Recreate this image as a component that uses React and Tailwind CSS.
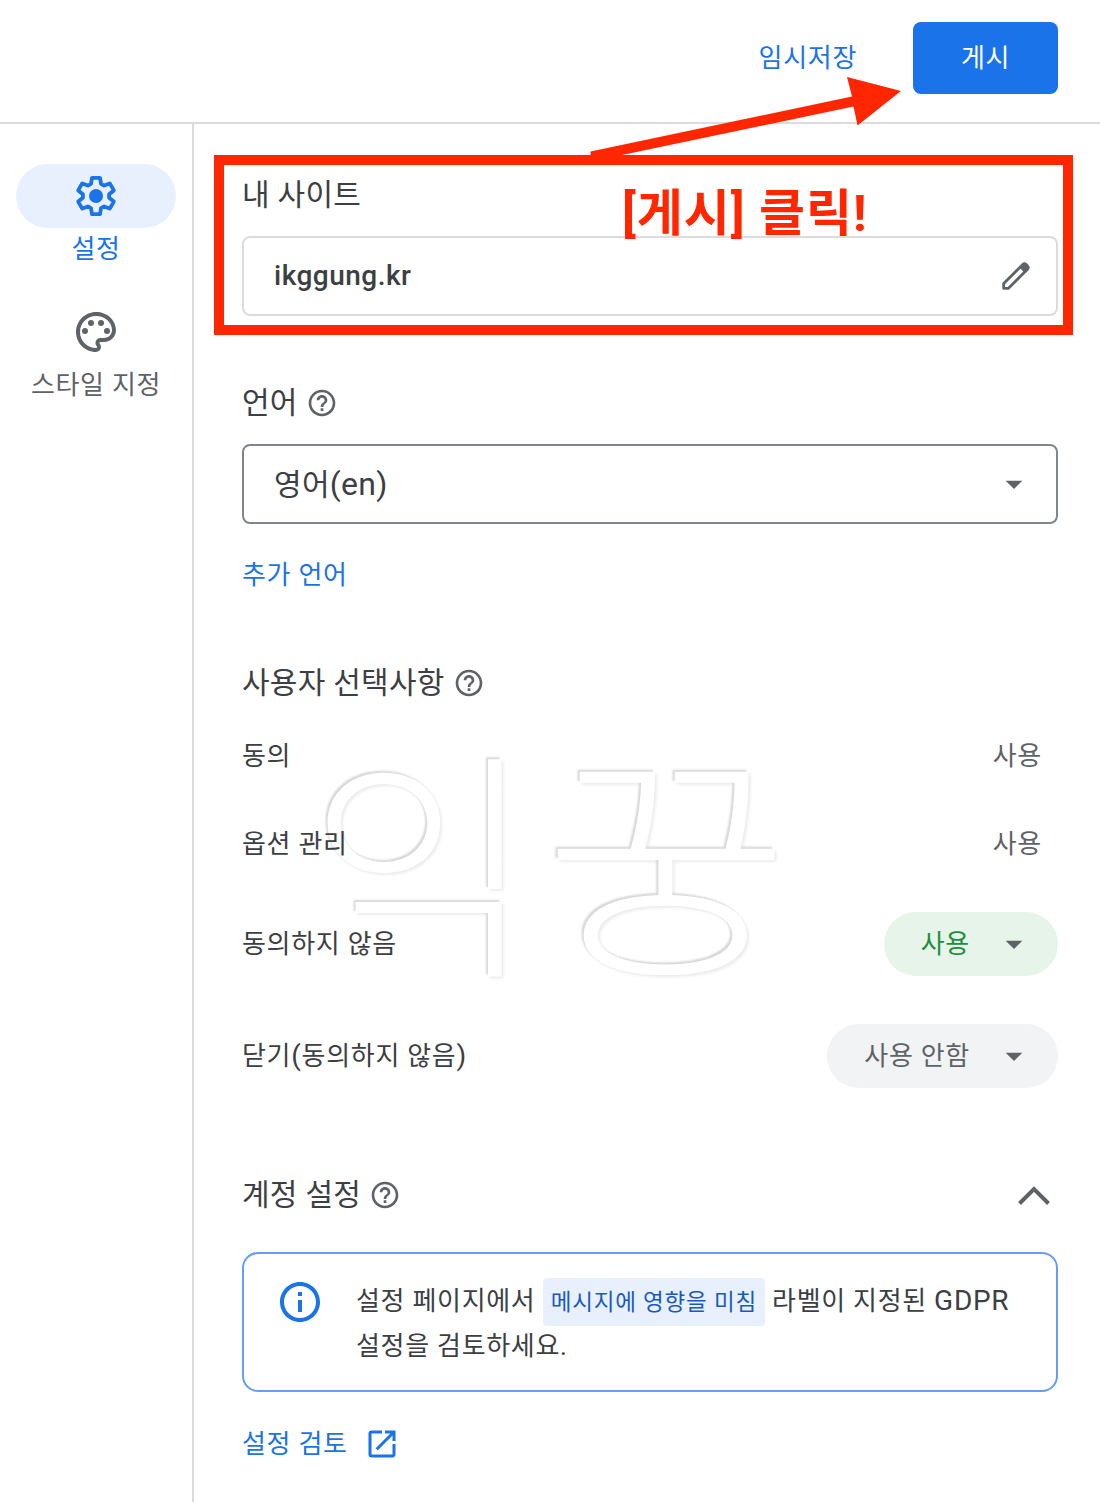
import { MdArrowDropDown, MdHelpOutline, MdInfoOutline, MdOpenInNew, MdOutlinePalette } from 'react-icons/md';

const OPTIONS = [
  { label: '동의', value: '사용' },
  { label: '옵션 관리', value: '사용' },
];

function GearIcon() {
  return (
    <svg viewBox="0 0 48 48" className="w-12 h-12" fill="none">
      <path
        d="M19 11.800 20 5.800H28L29 11.800 32.100 13.600 37.800 11.400 41.800 18.400 37.100 22.200V25.800L41.800 29.600 37.800 36.600 32.100 34.400 29 36.200 28 42.200H20L19 36.200 15.900 34.400 10.200 36.600 6.200 29.600 10.900 25.800V22.200L6.200 18.400 10.200 11.400 15.900 13.600Z"
        stroke="currentColor"
        strokeWidth="3.8"
        strokeLinejoin="round"
      />
      <circle cx="24" cy="24" r="7" fill="currentColor" />
    </svg>
  );
}

function PencilIcon() {
  return (
    <svg viewBox="0 0 36 36" className="w-9 h-9" fill="none">
      <path d="M5.700 30.300v-4.800L24.500 6.700q1.900-1.900 3.800 0l1 1q1.900 1.900 0 3.800L10.500 30.300z" stroke="#5f6368" strokeWidth="2.800" strokeLinejoin="round" />
      <path d="M21.500 9.700 25 6.200q1.500-1.500 3 0l1.800 1.800q1.500 1.500 0 3l-3.500 3.500z" fill="#5f6368" />
    </svg>
  );
}

function Heading({ children, help }) {
  return (
    <div className="flex items-center h-10">
      <h2 className="text-[30px] tracking-[0.25px]">{children}</h2>
      {help && <MdHelpOutline className="w-8 h-8 ml-2 mt-px text-[#5f6368]" />}
    </div>
  );
}

function Pill({ children, className }) {
  return (
    <div className={`flex items-center h-16 rounded-full pl-[37px] pr-6 ${className}`}>
      <span>{children}</span>
      <MdArrowDropDown className="w-10 h-10 ml-6 text-[#5f6368]" />
    </div>
  );
}

export default function App() {
  return (
    <div className="relative isolate w-[1100px] h-[1502px] overflow-hidden bg-white flex flex-col font-['Roboto','Noto_Sans_CJK_KR',sans-serif] text-[26px] tracking-[0.7px] text-[#3c4043]">
      {/* Top bar */}
      <header className="flex justify-end items-start h-[124px] shrink-0 pt-[22px] pr-[42px] border-b-2 border-[#dadce0]">
        <button className="h-[72px] mr-[56px] text-[#1a73e8] tracking-[0.7px]">임시저장</button>
        <button className="w-[145px] h-[72px] rounded-lg bg-[#1a73e8] text-white tracking-[0.7px]">게시</button>
      </header>

      <div className="flex flex-1">
        {/* Side navigation */}
        <nav className="w-[194px] shrink-0 border-r-2 border-[#dadce0] pt-10 flex flex-col items-center">
          <div className="w-40 h-16 rounded-full bg-[#e8f0fe] flex items-center justify-center text-[#1a73e8]">
            <GearIcon />
          </div>
          <span className="h-10 leading-[43px] text-[#1a73e8]">설정</span>
          <MdOutlinePalette className="w-12 h-12 mt-10 text-[#5f6368]" />
          <span className="h-10 leading-[43px] mt-2 text-[#5f6368]">스타일 지정</span>
        </nav>

        {/* Settings */}
        <main className="flex-1 pl-12 pr-[42px] pt-[50px]">
          <Heading>내 사이트</Heading>
          <div className="mt-[22px] h-20 rounded-lg border-2 border-[#dadce0] flex items-center justify-between pl-[30px] pr-[22px]">
            <span className="text-[28px] font-medium tracking-[0.5px]">ikggung.kr</span>
            <PencilIcon />
          </div>

          <div className="mt-[66px]">
            <Heading help>언어</Heading>
          </div>
          <div className="mt-[22px] h-20 rounded-lg border-2 border-[#80868b] flex items-center justify-between pl-[30px] pr-[22px]">
            <span className="text-[30px] tracking-[0.3px]">영어<span className="text-[32px]">(en)</span></span>
            <MdArrowDropDown className="w-10 h-10 text-[#5f6368]" />
          </div>
          <p className="mt-[31px] h-[39px] leading-10 text-[#1a73e8]">추가 언어</p>

          <div className="mt-[68px]">
            <Heading help>사용자 선택사항</Heading>
          </div>
          <div className="mt-2.5">
            {OPTIONS.map((option) => (
              <div key={option.label} className="flex items-center justify-between h-[88px] pr-4">
                <span>{option.label}</span>
                <span className="text-[#5f6368]">{option.value}</span>
              </div>
            ))}
            <div className="flex items-center justify-between h-28">
              <span>동의하지 않음</span>
              <Pill className="bg-[#e6f4ea] text-[#1e8e3e]">사용</Pill>
            </div>
            <div className="flex items-center justify-between h-28">
              <span>닫기<span className="text-[28px]">(</span>동의하지 않음<span className="text-[28px]">)</span></span>
              <Pill className="bg-[#f1f3f4] text-[#5f6368]">사용 안함</Pill>
            </div>
          </div>

          <div className="mt-[58px] flex items-center justify-between">
            <Heading help>계정 설정</Heading>
            <svg viewBox="0 0 48 48" className="w-12 h-12 mt-0.5 -mb-0.5" fill="none">
              <path d="M9.500 31.500 24 17l14.500 14.500" stroke="#5f6368" strokeWidth="4" />
            </svg>
          </div>
          <div className="mt-[34px] h-[140px] rounded-2xl border-2 border-[#669df6] flex pl-8 pt-6">
            <MdInfoOutline className="w-12 h-12 shrink-0 text-[#1a73e8]" />
            <p className="ml-8 leading-[45px]">
              설정 페이지에서{' '}
              <span className="inline-block h-12 leading-[48px] -my-2 px-2 rounded bg-[#e8f0fe] text-[#185abc] text-[22.5px] tracking-[0.8px]">메시지에 영향을 미침</span>
              {' '}라벨이 지정된 <span className="text-[28px]">GDPR</span>
              <br />설정을 검토하세요.
            </p>
          </div>
          <div className="mt-8 flex items-center h-10 text-[#1a73e8]">
            <span>설정 검토</span>
            <MdOpenInNew className="w-9 h-9 ml-4" />
          </div>
        </main>
      </div>

      {/* Embossed watermark under the content */}
      <div className="absolute -z-10 left-[308px] top-[753px] flex scale-y-[0.98] text-[248px] leading-[248px] font-light tracking-normal whitespace-nowrap text-white select-none [text-shadow:-2px_-2px_2px_#d8d8d8,2px_2px_3px_#ececec]">
        <span>익</span>
        <span className="ml-[7px] origin-left scale-x-[1.08]">꿍</span>
      </div>

      {/* Red callout */}
      <div className="absolute left-[214px] top-[155px] w-[859px] h-[180px] border-[10px] border-[#ff2600]" />
      <svg className="absolute left-[580px] top-[70px] w-[330px] h-[95px]" viewBox="580 70 330 95">
        <path d="M590.500 151.500 852 96.500 847 77 901 91 857.500 125.500 853.500 106.500 622 155v3H590.500z" fill="#ff2600" />
      </svg>
      <div className="absolute left-[622px] top-[182px] text-[50px] leading-[64px] font-bold tracking-[1px] whitespace-nowrap text-[#ff2600]">
        [게시] 클릭!
      </div>
    </div>
  );
}
